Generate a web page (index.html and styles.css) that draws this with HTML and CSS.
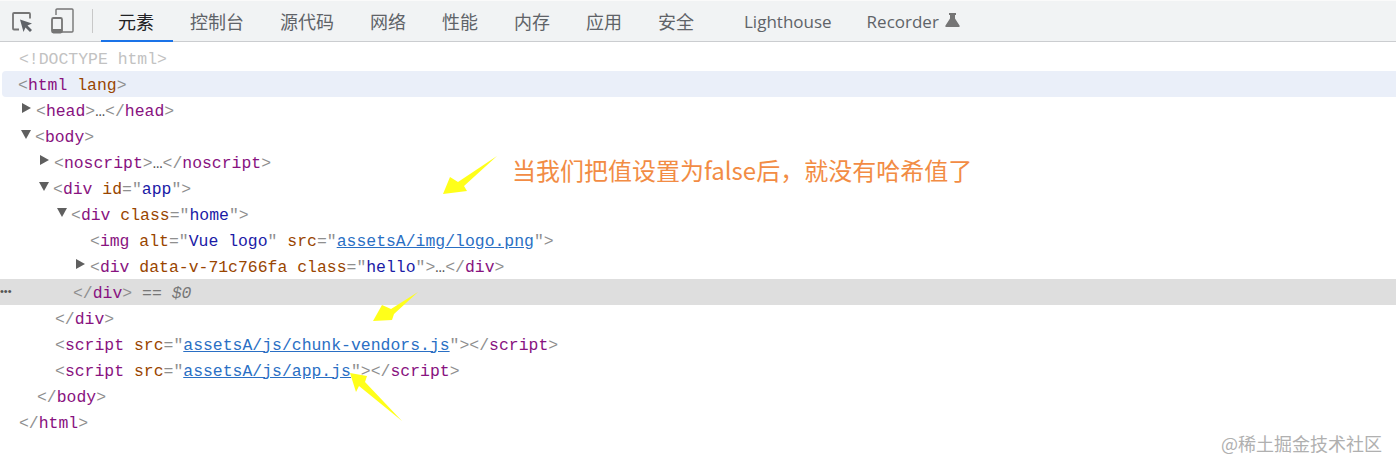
FILE: index.html
```html
<!DOCTYPE html>
<html lang="zh">
<head>
<meta charset="utf-8">
<title>DevTools</title>
<link rel="stylesheet" href="styles.css">
</head>
<body>
<header class="toolbar">
  <div class="tools">
    <svg class="icon-inspect" width="22" height="22" viewBox="0 0 22 22">
      <path d="M8 18.500H3a1 1 0 0 1-1-1V3a1 1 0 0 1 1-1h15a1 1 0 0 1 1 1v4.500" fill="none" stroke="#757575" stroke-width="1.800"/>
      <path d="M9 8.500 21 12.500 16.500 14.500 21 19 19 21 14.500 16.500 12.500 21Z" fill="#5f6368"/>
    </svg>
    <svg class="icon-device" width="24" height="26" viewBox="0 0 24 26">
      <path d="M6 7V2a1 1 0 0 1 1-1h15a1 1 0 0 1 1 1v21a1 1 0 0 1-1 1H12" fill="none" stroke="#757575" stroke-width="1.400"/>
      <rect x="2" y="10" width="10" height="14.500" rx="1.500" fill="none" stroke="#757575" stroke-width="1.800"/>
      <rect x="2" y="21" width="10" height="3.500" fill="#757575"/>
    </svg>
    <span class="divider"></span>
  </div>
  <nav class="tabs">
    <span class="tab active">元素</span>
    <span class="tab">控制台</span>
    <span class="tab">源代码</span>
    <span class="tab">网络</span>
    <span class="tab">性能</span>
    <span class="tab">内存</span>
    <span class="tab">应用</span>
    <span class="tab">安全</span>
    <span class="tab tab-gap">Lighthouse</span>
    <span class="tab tab-flask">Recorder
      <svg class="flask" width="15" height="14" viewBox="0 0 15 14"><path d="M4 0h7v2H10v3.500L14.500 12.500a1 1 0 0 1-.8 1.500H1.300a1 1 0 0 1-.8-1.500L5 5.500V2H4Z" fill="#757575"/></svg>
    </span>
  </nav>
</header>

<main class="tree">
  <div class="row l0 doctype">&lt;!DOCTYPE html&gt;</div>
  <div class="row l0b hover"><span class="b">&lt;</span><span class="t">html</span>&nbsp;<span class="a">lang</span><span class="b">&gt;</span></div>
  <div class="row l1"><i class="tw closed"></i><span class="b">&lt;</span><span class="t">head</span><span class="b">&gt;</span>…<span class="b">&lt;/</span><span class="t">head</span><span class="b">&gt;</span></div>
  <div class="row l1"><i class="tw open"></i><span class="b">&lt;</span><span class="t">body</span><span class="b">&gt;</span></div>
  <div class="row l2"><i class="tw closed"></i><span class="b">&lt;</span><span class="t">noscript</span><span class="b">&gt;</span>…<span class="b">&lt;/</span><span class="t">noscript</span><span class="b">&gt;</span></div>
  <div class="row l2"><i class="tw open"></i><span class="b">&lt;</span><span class="t">div</span>&nbsp;<span class="a">id</span><span class="b">="</span><span class="v">app</span><span class="b">"&gt;</span></div>
  <div class="row l3"><i class="tw open"></i><span class="b">&lt;</span><span class="t">div</span>&nbsp;<span class="a">class</span><span class="b">="</span><span class="v">home</span><span class="b">"&gt;</span></div>
  <div class="row l4"><span class="b">&lt;</span><span class="t">img</span>&nbsp;<span class="a">alt</span><span class="b">="</span><span class="v">Vue logo</span><span class="b">"</span>&nbsp;<span class="a">src</span><span class="b">="</span><a class="u">assetsA/img/logo.png</a><span class="b">"&gt;</span></div>
  <div class="row l4"><i class="tw closed"></i><span class="b">&lt;</span><span class="t">div</span>&nbsp;<span class="a">data-v-71c766fa</span>&nbsp;<span class="a">class</span><span class="b">="</span><span class="v">hello</span><span class="b">"&gt;</span>…<span class="b">&lt;/</span><span class="t">div</span><span class="b">&gt;</span></div>
  <div class="row l3b selected"><span class="dots">•••</span><span class="b">&lt;/</span><span class="t">div</span><span class="b">&gt;</span>&nbsp;<em class="eq">== $0</em></div>
  <div class="row l2b"><span class="b">&lt;/</span><span class="t">div</span><span class="b">&gt;</span></div>
  <div class="row l2b"><span class="b">&lt;</span><span class="t">script</span>&nbsp;<span class="a">src</span><span class="b">="</span><a class="u">assetsA/js/chunk-vendors.js</a><span class="b">"&gt;&lt;/</span><span class="t">script</span><span class="b">&gt;</span></div>
  <div class="row l2b"><span class="b">&lt;</span><span class="t">script</span>&nbsp;<span class="a">src</span><span class="b">="</span><a class="u">assetsA/js/app.js</a><span class="b">"&gt;&lt;/</span><span class="t">script</span><span class="b">&gt;</span></div>
  <div class="row l1b"><span class="b">&lt;/</span><span class="t">body</span><span class="b">&gt;</span></div>
  <div class="row l0"><span class="b">&lt;/</span><span class="t">html</span><span class="b">&gt;</span></div>
</main>

<svg class="arrows" width="1396" height="469" viewBox="0 0 1396 469">
  <polygon points="443,194 450,177 458,182 497,156 464,186 467,191" fill="#ffff1a"/>
  <polygon points="373,321 382,305 391,309 418,292 394,314 392,320" fill="#ffff1a"/>
  <polygon points="350,373 367,376 365,382 402,421 359,386 356,392" fill="#ffff1a"/>
</svg>
<div class="note">当我们把值设置为false后，就没有哈希值了</div>
<div class="mark">@稀土掘金技术社区</div>
</body>
</html>
```
FILE: styles.css
```css
* { box-sizing: border-box; }
html, body { margin: 0; padding: 0; }
body {
  width: 1396px;
  height: 469px;
  background: #fff;
  overflow: hidden;
  position: relative;
  font-family: "Liberation Mono", "Noto Sans CJK SC", monospace;
}
.toolbar {
  display: flex;
  height: 42px;
  background: #f1f3f4;
  border-top: 1px solid #fafafa;
  border-bottom: 1px solid #cbcdd0;
}
.tools {
  display: flex;
  align-items: center;
  width: 101px;
  padding-left: 11px;
}
.icon-inspect { margin-top: 1px; }
.icon-device { margin-left: 17px; }
.divider {
  width: 1px;
  height: 24px;
  margin-left: 18px;
  background: #c8c8c8;
}
.tabs { display: flex; }
.tab {
  display: flex;
  align-items: center;
  height: 41px;
  padding: 0 18px 1px;
  font-family: "Noto Sans CJK SC", "Noto Sans", sans-serif;
  font-size: 18px;
  color: #5f6368;
  white-space: nowrap;
}
.tab.active {
  color: #202124;
  border-bottom: 2px solid #1a73e8;
  padding: 0 19px 0 17px;
  margin-right: -1px;
}
.tab-gap, .tab-flask {
  font-family: "Open Sans", "Noto Sans CJK SC", sans-serif;
  font-size: 17px;
}
.tab-gap { margin-left: 14px; margin-right: -1px; }
.flask { margin-left: 6px; margin-top: -3px; }

.tree {
  padding-top: 3px;
  font-size: 16.45px;
  color: #555;
}
.row {
  display: flex;
  align-items: center;
  height: 26px;
  padding-top: 2px;
  white-space: pre;
}
.l0 { padding-left: 19px; }
.l0b { padding-left: 18px; }
.l1 { padding-left: 36px; }
.l1b { padding-left: 37px; }
.l2 { padding-left: 54px; }
.l2b { padding-left: 55px; }
.l3 { padding-left: 72px; }
.l3b { padding-left: 73px; }
.l4 { padding-left: 90px; }
.hover {
  margin-left: 2px;
  padding-left: 16px;
  background: #eaeff9;
  border-radius: 4px 0 0 4px;
}
.selected {
  background: #dedede;
  position: relative;
}
.doctype { color: #c2c2c2; }
.b { color: #8f8f8f; }
.t { color: #881280; }
.a { color: #994500; }
.v { color: #1a1aa6; }
.u { color: #2a6fc4; text-decoration: underline; }
.eq { color: #777; }
.dots {
  position: absolute;
  left: 0;
  top: 0;
  line-height: 24px;
  font-family: "Liberation Sans", sans-serif;
  font-size: 11px;
  letter-spacing: 0;
  color: #555;
}
.tw {
  width: 0;
  height: 0;
  margin-left: -14px;
  margin-right: 5px;
  margin-top: -6px;
}
.tw.closed {
  border-top: 5px solid transparent;
  border-bottom: 5px solid transparent;
  border-left: 9px solid #5f5f5f;
}
.tw.open {
  margin-left: -15px;
  margin-right: 4px;
  border-left: 5.500px solid transparent;
  border-right: 5.500px solid transparent;
  border-top: 9px solid #5f5f5f;
}
.arrows {
  position: absolute;
  left: 0;
  top: 0;
  pointer-events: none;
}
.note {
  position: absolute;
  left: 512px;
  top: 152px;
  font-family: "Noto Sans CJK SC", sans-serif;
  font-size: 24px;
  line-height: 35px;
  color: #f28c44;
  white-space: nowrap;
}
.mark {
  position: absolute;
  left: 1221px;
  top: 430px;
  font-family: "Noto Sans CJK SC", sans-serif;
  font-size: 18px;
  line-height: 26px;
  color: #b0b0b0;
  white-space: nowrap;
}
```
